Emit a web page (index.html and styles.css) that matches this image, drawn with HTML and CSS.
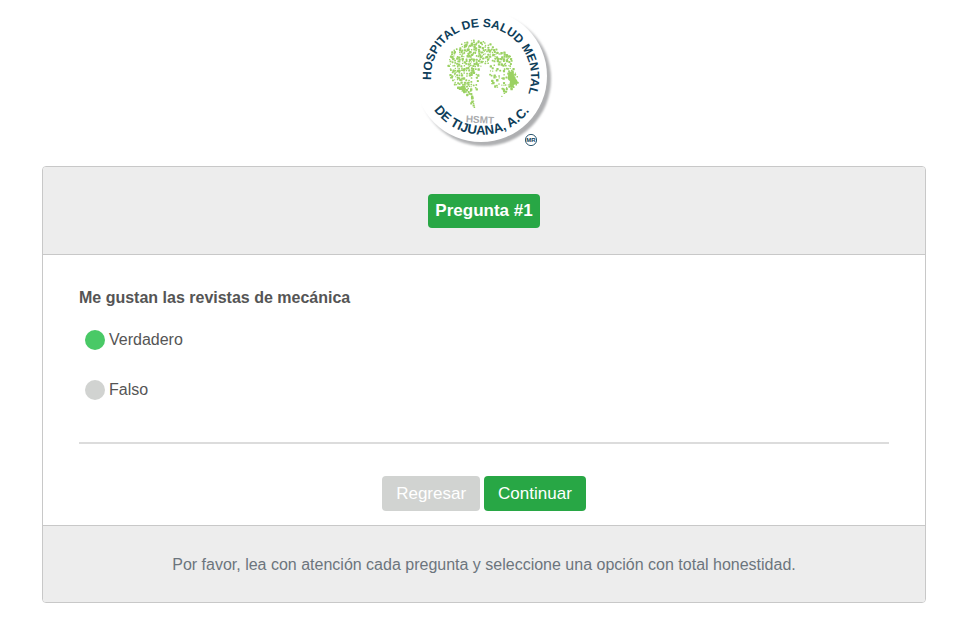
FILE: index.html
```html
<!DOCTYPE html>
<html lang="es">
<head>
<meta charset="utf-8">
<meta name="viewport" content="width=device-width, initial-scale=1">
<title>Pregunta #1</title>
<link rel="stylesheet" href="styles.css">
</head>
<body>
<header class="brand">
  <svg class="logo" viewBox="0 0 150 145" role="img" aria-label="Hospital de Salud Mental de Tijuana, A.C.">
    <defs>
      <path id="arc-top" d="M21.1 70 A50 50 0 0 1 71 17 A50 50 0 0 1 121 67 A50 50 0 0 1 111 97"/>
      <path id="arc-bottom" d="M24 100 A59 59 0 0 0 127 87"/>
      <filter id="soft" x="-10%" y="-10%" width="120%" height="120%"><feGaussianBlur stdDeviation="0.8"/></filter>
      <linearGradient id="rim" x1="0" y1="0" x2="1" y2="1">
        <stop offset="0.35" stop-color="#fff"/>
        <stop offset="0.6" stop-color="#b4b5b7"/>
        <stop offset="1" stop-color="#a9aaac"/>
      </linearGradient>
    </defs>
    <circle cx="74" cy="69" r="67" fill="url(#rim)" filter="url(#soft)"/>
    <circle cx="71" cy="66" r="66" fill="#fff"/>
    <g id="head" transform="scale(0.3333)" fill="#9bd163">
      <path d="M296 186l10-2 5 8 2 9 10 13-3 8-9 2 1 8-9 2-5-8 2-12-7-8z"/>
      <path d="M153 229l8-2 7 8-1 9-8 1-7-8zM158 234l9 4-2 11-6-2z"/>
    </g>
    <text class="logo-hsmt" x="70" y="113" text-anchor="middle" transform="rotate(3 70 109)">HSMT</text>
    <text class="logo-top"><textPath href="#arc-top">HOSPITAL DE SALUD MENTAL</textPath></text>
    <text class="logo-bottom"><textPath href="#arc-bottom">DE TIJUANA, A.C.</textPath></text>
    <circle cx="121" cy="130" r="5.6" fill="#fff" stroke="#174660" stroke-width="0.9"/>
    <text class="logo-mark" x="121" y="132" text-anchor="middle">MR</text>
  </svg>
</header>
<main class="card">
  <div class="card-header"><h1 class="badge">Pregunta #1</h1></div>
  <form class="card-body">
    <fieldset class="question">
      <legend>Me gustan las revistas de mecánica</legend>
      <label class="option"><input type="radio" name="respuesta" value="V" checked>Verdadero</label>
      <label class="option"><input type="radio" name="respuesta" value="F">Falso</label>
    </fieldset>
    <hr>
    <div class="actions">
      <button class="btn btn-back" type="button">Regresar</button>
      <button class="btn" type="submit">Continuar</button>
    </div>
  </form>
  <footer class="card-footer">Por favor, lea con atención cada pregunta y seleccione una opción con total honestidad.</footer>
</main>
<script src="logo.js"></script>
</body>
</html>
```
FILE: styles.css
```css
* {
  box-sizing: border-box;
}

body {
  margin: 0;
  padding: 10px 36px 24px 42px;
  background: #fff;
  color: #555;
  font: 16px/24px "Liberation Sans", Arial, sans-serif;
}

.brand {
  display: flex;
  justify-content: center;
  padding: 0 0 11px 2px;
}

.logo {
  width: 150px;
  height: 145px;
}

.logo text {
  font-family: "Liberation Sans", Arial, sans-serif;
  font-weight: bold;
  fill: #0d3d59;
}

.logo .logo-top {
  font-size: 12px;
}

.logo .logo-bottom {
  font-size: 13px;
}

.logo .logo-hsmt {
  font-size: 10px;
  fill: #aaabad;
}

.logo .logo-mark {
  font-size: 6px;
}

.card {
  border: 1px solid #c8c8c8;
  border-radius: 4px;
  overflow: hidden;
}

.card-header {
  display: flex;
  justify-content: center;
  padding: 27px 20px 26px;
  background: #ededed;
  border-bottom: 1px solid #c8c8c8;
}

.badge {
  margin: 0;
  padding: 0 7px;
  border-radius: 4px;
  background: #28a745;
  color: #fff;
  font-size: 17px;
  line-height: 34px;
}

.card-body {
  padding: 31px 36px 14px;
}

.question {
  margin: 0;
  padding: 0;
  border: 0;
}

.question legend {
  padding: 0;
  margin-bottom: 18px;
  font-weight: bold;
}

.option {
  display: flex;
  align-items: center;
  gap: 4px;
  width: fit-content;
  margin: 0 0 26px 6px;
}

.option input {
  appearance: none;
  width: 20px;
  height: 20px;
  margin: 0;
  border-radius: 50%;
  background: #d1d3d1;
}

.option input:checked {
  background: #49c966;
}

hr {
  margin: 14px 0 32px;
  border: 0;
  border-top: 2px solid #dcdcdc;
}

.actions {
  display: flex;
  justify-content: center;
  gap: 4px;
}

.btn {
  height: 35px;
  padding: 0 14px;
  border: 0;
  border-radius: 4px;
  background: #28a745;
  color: #fff;
  font: 17px/35px "Liberation Sans", Arial, sans-serif;
}

.btn-back {
  background: #d1d3d1;
}

.card-footer {
  padding: 27px 20px 25px;
  border-top: 1px solid #c8c8c8;
  background: #ededed;
  color: #6c757d;
  text-align: center;
}
```
FILE: logo.js
```js
// Fills the head silhouette of the logo with scattered dots.
const head = document.getElementById("head");
const dense = [[112,148],[123,124],[140,106],[165,93],[190,87],[220,90],[245,103],[270,119],[303,134],[308,152],[301,164],[314,180],[324,212],[308,234],[296,234],[292,205],[287,178],[268,162],[245,148],[225,152],[205,165],[192,180],[184,205],[186,232],[190,262],[191,290],[180,280],[176,258],[152,241],[130,222],[113,190]];
const sparse = [[205,150],[230,140],[270,150],[290,180],[297,225],[282,270],[268,268],[268,240],[240,222],[236,195],[226,170],[204,195],[200,225],[198,245],[180,225]];

function inside(x, y, poly) {
  let hit = false;
  for (let i = 0, j = poly.length - 1; i < poly.length; j = i++) {
    const [a, b] = poly[i], [c, d] = poly[j];
    if ((b > y) !== (d > y) && x < (c - a) * (y - b) / (d - b) + a) hit = !hit;
  }
  return hit;
}

let seed = 7;
function rand() {
  seed = (seed * 16807) % 2147483647;
  return seed / 2147483647;
}

for (let y = 86; y < 294; y += 7) {
  for (let x = 109; x < 328; x += 7) {
    const px = x + rand() * 5, py = y + rand() * 5, size = 3.5 + rand() * 4, keep = rand();
    const chance = inside(px, py, dense) ? 0.92 : inside(px, py, sparse) ? 0.5 : 0;
    if (keep > chance) continue;
    const dot = document.createElementNS("http://www.w3.org/2000/svg", "rect");
    dot.setAttribute("x", px.toFixed(1));
    dot.setAttribute("y", py.toFixed(1));
    dot.setAttribute("width", size.toFixed(1));
    dot.setAttribute("height", size.toFixed(1));
    dot.setAttribute("rx", "1.5");
    head.appendChild(dot);
  }
}
```
